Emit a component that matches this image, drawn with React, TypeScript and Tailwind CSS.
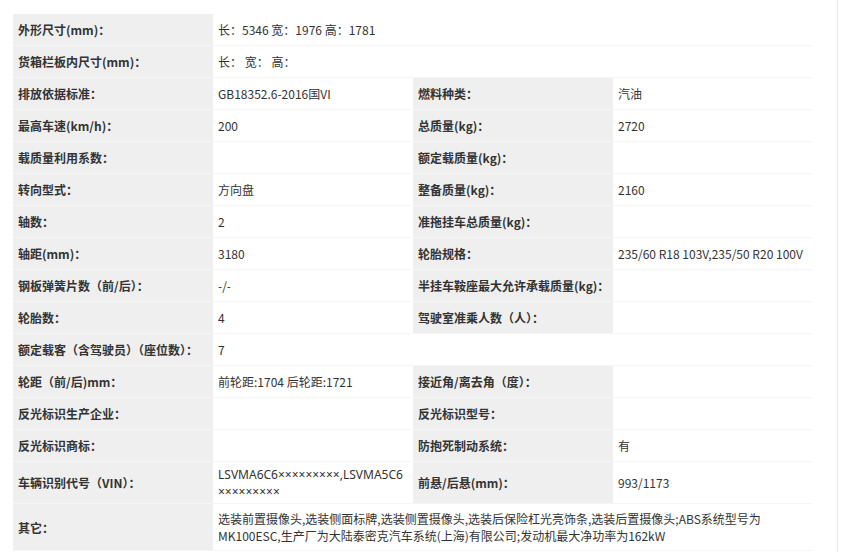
const rows: [string, string, string?, string?][] = [
  ["外形尺寸(mm)：", "长：5346 宽：1976 高：1781"],
  ["货箱栏板内尺寸(mm)：", "长： 宽： 高："],
  ["排放依据标准：", "GB18352.6-2016国VI", "燃料种类：", "汽油"],
  ["最高车速(km/h)：", "200", "总质量(kg)：", "2720"],
  ["载质量利用系数：", "", "额定载质量(kg)：", ""],
  ["转向型式：", "方向盘", "整备质量(kg)：", "2160"],
  ["轴数：", "2", "准拖挂车总质量(kg)：", ""],
  ["轴距(mm)：", "3180", "轮胎规格：", "235/60 R18 103V,235/50 R20 100V"],
  ["钢板弹簧片数（前/后）：", "-/-", "半挂车鞍座最大允许承载质量(kg)：", ""],
  ["轮胎数：", "4", "驾驶室准乘人数（人）：", ""],
  ["额定载客（含驾驶员）（座位数）：", "7"],
  ["轮距（前/后)mm：", "前轮距:1704 后轮距:1721", "接近角/离去角（度）：", ""],
  ["反光标识生产企业：", "", "反光标识型号：", ""],
  ["反光标识商标：", "", "防抱死制动系统：", "有"],
  ["车辆识别代号（VIN）：", "LSVMA6C6×××××××××,LSVMA5C6×××××××××", "前悬/后悬(mm)：", "993/1173"],
  ["其它：", "选装前置摄像头,选装侧面标牌,选装侧置摄像头,选装后保险杠光亮饰条,选装后置摄像头;ABS系统型号为MK100ESC,生产厂为大陆泰密克汽车系统(上海)有限公司;发动机最大净功率为162kW"],
]

function Label({ text }: { text: string }) {
  return (
    <div className="w-[200px] shrink-0 bg-[#efefef] pl-[5px] font-bold flex items-center whitespace-nowrap overflow-visible">
      {text}
    </div>
  )
}

export default function App() {
  return (
    <div className="w-[846px] h-[552px] bg-white overflow-hidden text-[12px] text-[#333] leading-[17px]" style={{ fontFamily: '"Microsoft YaHei", "Noto Sans CJK SC", sans-serif' }}>
      <div className="w-[838px] h-[552px] border-r border-[#e6e6e6] pt-[14px] pl-[13px]">
        <div className="w-[800px]">
          {rows.map(([l1, v1, l2, v2], i) => {
            const h = i === 14 ? "min-h-[42px]" : i === 15 ? "min-h-[47px]" : "min-h-[32px]"
            return (
              <div key={i} className={`flex ${h} border-b border-[#f6f6f6]`}>
                <Label text={l1} />
                {l2 === undefined ? (
                  <div className="flex-1 pl-[5px] pr-[40px] flex items-center">{v1}</div>
                ) : (
                  <>
                    <div
                      className="w-[200px] shrink-0 px-[5px] flex items-center break-all"
                      style={i === 14 ? { fontFamily: '"Noto Sans", "Noto Sans CJK SC", sans-serif' } : undefined}
                    >
                      {v1}
                    </div>
                    <Label text={l2} />
                    <div className="w-[200px] shrink-0 px-[5px] flex items-center whitespace-nowrap">{v2}</div>
                  </>
                )}
              </div>
            )
          })}
        </div>
      </div>
    </div>
  )
}
